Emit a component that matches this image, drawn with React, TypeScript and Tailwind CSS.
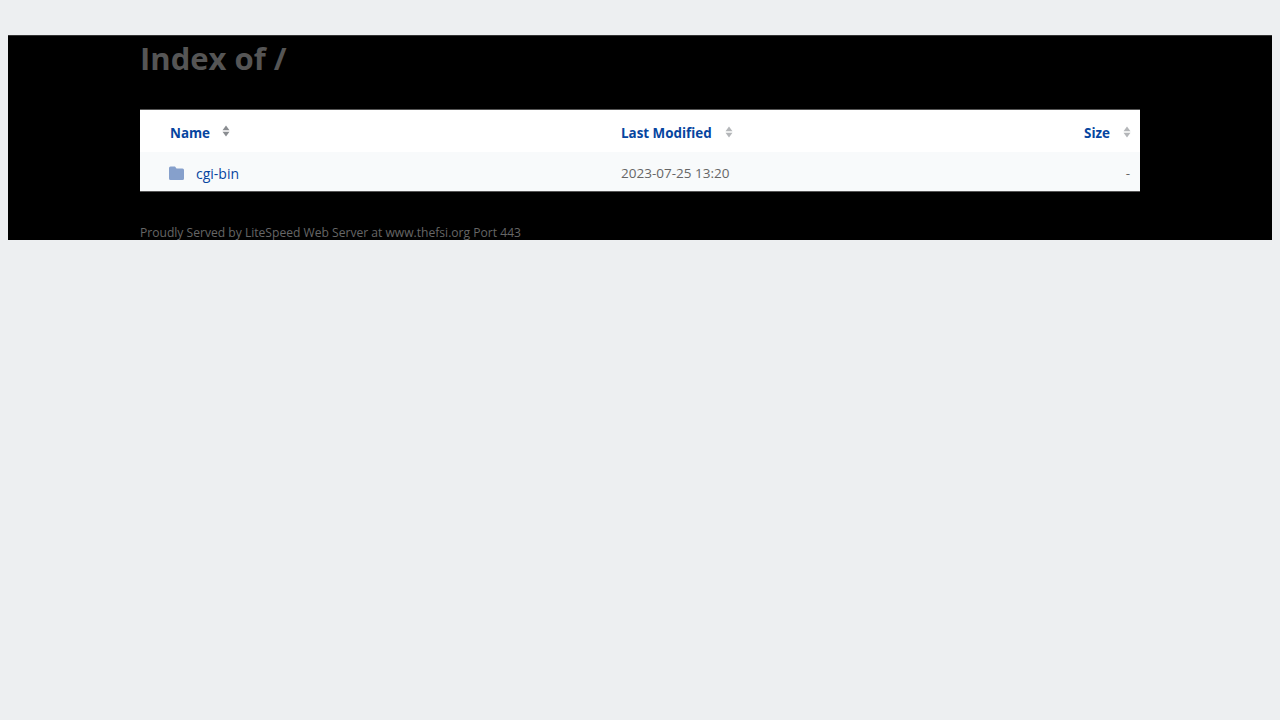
import React from "react";

function SortArrows({ dark = false }: { dark?: boolean }) {
  return (
    <svg width="8" height="12" viewBox="0 0 8 12" className={dark ? "text-[#8a8d91]" : "text-[#b4b6b9]"}>
      <path d="M4 0.5 L7.5 5.2 L0.5 5.2 Z" fill="currentColor" />
      <path d="M4 11.5 L7.5 6.8 L0.5 6.8 Z" fill="currentColor" />
    </svg>
  );
}

export default function App() {
  return (
    <div className="min-h-[720px] bg-[#edeff1] px-2 pt-[35px] font-['Open_Sans','Noto_Sans',sans-serif]">
      <div className="h-[205px] overflow-hidden bg-black border-t border-[#333]">
        <div className="mx-auto w-[1000px]">
          <h1 className="h-[73px] text-[31px] leading-[44px] font-bold text-[#555]">Index of /</h1>
          <div className="border-y border-[#555] bg-white">
            <div className="grid h-[42px] grid-cols-[481px_1fr_auto] items-center pt-[5px] text-[13.4px] font-bold text-[#0645a0]">
              <div className="flex items-center gap-[12px] pl-[30px]">
                <span>Name</span>
                <div className="-mt-[4px]">
                  <SortArrows dark />
                </div>
              </div>
              <div className="flex items-center gap-[13px]">
                <span>Last Modified</span>
                <div className="-mt-[3px]">
                  <SortArrows />
                </div>
              </div>
              <div className="flex items-center gap-[13px] pr-[9px]">
                <span>Size</span>
                <div className="-mt-[3px]">
                  <SortArrows />
                </div>
              </div>
            </div>
            <div className="grid h-[39px] grid-cols-[481px_1fr_auto] items-center bg-[#f8fafb] pt-[3px] text-[13.5px] text-[#666]">
              <div className="flex items-center gap-[12px] pl-[29px] text-[#0645a0]">
                <svg width="15" height="14" viewBox="0 0 15 14" className="-mt-[1px] text-[#86a0cc]">
                  <path
                    d="M1.5 0.5 H6 L7.5 2.5 H13.5 A1.5 1.5 0 0 1 15 4 V12.5 A1.5 1.5 0 0 1 13.5 14 H1.5 A1.5 1.5 0 0 1 0 12.5 V2 A1.5 1.5 0 0 1 1.5 0.5 Z"
                    fill="currentColor"
                  />
                </svg>
                <span className="text-[14px]">cgi-bin</span>
              </div>
              <div>2023-07-25 13:20</div>
              <div className="pr-[10px]">-</div>
            </div>
          </div>
          <p className="mt-[31px] text-[12.1px] leading-[20px] text-[#666]">
            Proudly Served by LiteSpeed Web Server at www.thefsi.org Port 443
          </p>
        </div>
      </div>
    </div>
  );
}
